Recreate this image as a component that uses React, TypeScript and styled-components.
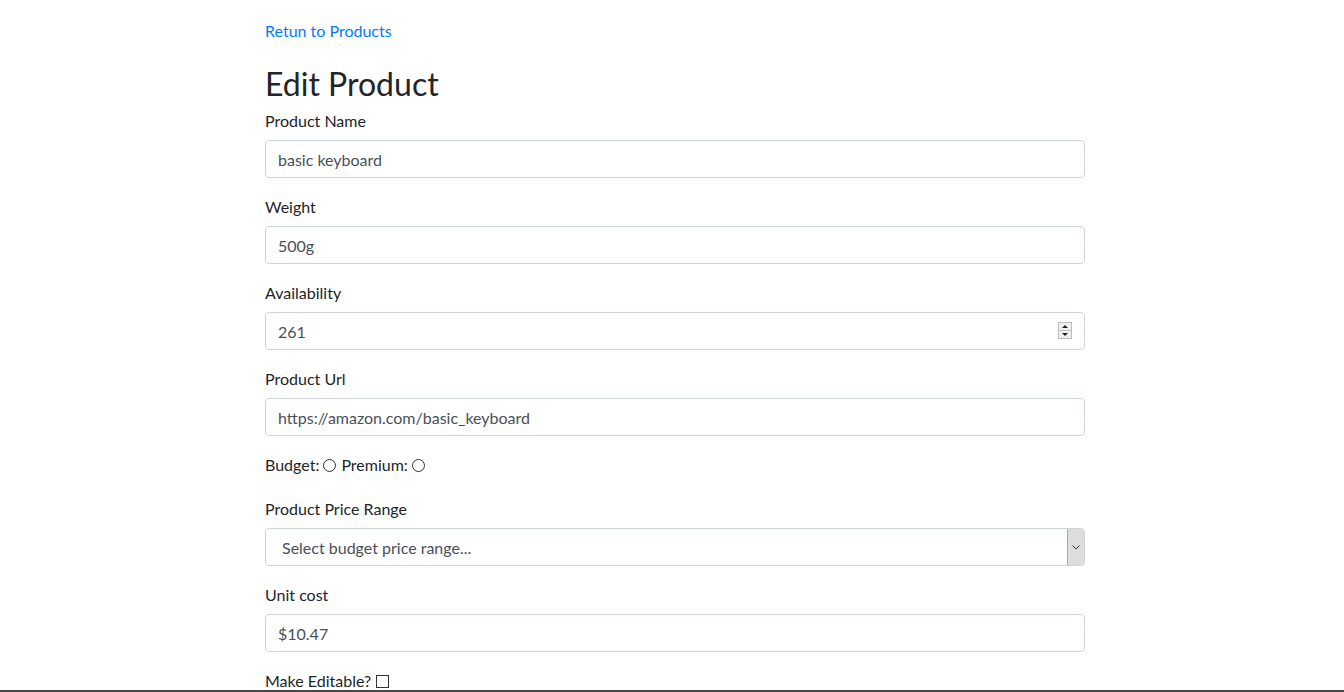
import { useState } from 'react';
import styled, { createGlobalStyle } from 'styled-components';

const GlobalStyle = createGlobalStyle`
  html, body {
    margin: 0;
    padding: 0;
    background: #fff;
  }
  body {
    font-family: "Segoe UI", Lato, "Liberation Sans", sans-serif;
    font-size: 16px;
    line-height: 1.5;
    color: #212529;
    overflow: hidden;
  }
`;

const Page = styled.div`
  height: 692px;
  overflow: hidden;
`;

const Column = styled.div`
  width: 820px;
  margin-left: 265px;
  padding-top: 19px;
`;

const BackLink = styled.a`
  display: inline-block;
  color: #007bff;
  text-decoration: none;
  margin-bottom: 22px;
  cursor: pointer;
`;

const Title = styled.h2`
  margin: 0 0 5px;
  font-size: 32px;
  font-weight: 400;
  line-height: 1.2;
`;

const FormGroup = styled.div<{ $tight?: boolean }>`
  margin-bottom: ${({ $tight }) => ($tight ? '19px' : '16px')};
`;

const Label = styled.label`
  display: block;
  padding-top: 1px;
  margin-bottom: 7px;
`;

const Input = styled.input`
  box-sizing: border-box;
  display: block;
  width: 100%;
  height: 38px;
  padding: 6px 12px;
  font: inherit;
  color: #495057;
  border: 1px solid #ced4da;
  border-radius: 4px;
  background: #fff;
  outline: none;
  appearance: textfield;

  &::-webkit-inner-spin-button,
  &::-webkit-outer-spin-button {
    -webkit-appearance: none;
    margin: 0;
  }
`;

const FieldWrap = styled.div`
  position: relative;
`;

const Spinner = styled.div`
  position: absolute;
  right: 13px;
  top: 10px;
  width: 14px;
  height: 17px;
  box-sizing: border-box;
  border: 1px solid #bdbdbd;
  background: #f0f0f0;
  display: flex;
  flex-direction: column;
  pointer-events: none;
`;

const SpinHalf = styled.div<{ $down?: boolean }>`
  flex: 1;
  display: flex;
  align-items: center;
  justify-content: center;
  border-top: ${({ $down }) => ($down ? '1px solid #bdbdbd' : 'none')};

  &::after {
    content: '';
    width: 0;
    height: 0;
    border-left: 3px solid transparent;
    border-right: 3px solid transparent;
    ${({ $down }) => ($down ? 'border-top: 3px solid #222;' : 'border-bottom: 3px solid #222;')}
  }
`;

const Select = styled.select`
  box-sizing: border-box;
  display: block;
  width: 100%;
  height: 38px;
  padding: 7px 12px 5px 16px;
  font: inherit;
  color: #495057;
  border: 1px solid #ced4da;
  border-radius: 4px;
  background: #fff;
  outline: none;
  appearance: none;
`;

const DropButton = styled.div`
  position: absolute;
  right: 1px;
  top: 1px;
  bottom: 1px;
  width: 16px;
  background: #dddddd;
  border-left: 1px solid #a9a9a9;
  border-radius: 0 3px 3px 0;
  display: flex;
  align-items: center;
  justify-content: center;
  pointer-events: none;
`;

const InlineRow = styled.div`
  display: flex;
  align-items: center;
  padding-top: 1px;
`;

const RadioLabel = styled.label`
  display: inline-flex;
  align-items: center;
  margin-right: 5px;
`;

const Radio = styled.input`
  appearance: none;
  width: 13px;
  height: 13px;
  margin: 0 0 0 4px;
  border: 1px solid #333;
  border-radius: 50%;
  background: #fff;

  &:checked {
    background: radial-gradient(circle, #333 35%, #fff 40%);
  }
`;

const Check = styled.input`
  appearance: none;
  width: 13px;
  height: 13px;
  margin: 0 0 0 5px;
  border: 1px solid #333;
  border-radius: 0;
  background: #fff;
`;

const ScrollEdge = styled.div`
  position: fixed;
  left: 0;
  right: 0;
  bottom: 0;
  height: 2px;
  background: #464646;
`;

const App = () => {
  const [name, setName] = useState('basic keyboard');
  const [weight, setWeight] = useState('500g');
  const [availability, setAvailability] = useState('261');
  const [url, setUrl] = useState('https://amazon.com/basic_keyboard');
  const [cost, setCost] = useState('$10.47');
  const [tier, setTier] = useState('');
  const [editable, setEditable] = useState(false);

  return (
    <Page>
      <GlobalStyle />
      <Column>
        <BackLink>Retun to Products</BackLink>
        <Title>Edit Product</Title>

        <FormGroup>
          <Label>Product Name</Label>
          <Input value={name} onChange={(e) => setName(e.target.value)} />
        </FormGroup>

        <FormGroup>
          <Label>Weight</Label>
          <Input value={weight} onChange={(e) => setWeight(e.target.value)} />
        </FormGroup>

        <FormGroup>
          <Label>Availability</Label>
          <FieldWrap>
            <Input type='number' value={availability} onChange={(e) => setAvailability(e.target.value)} />
            <Spinner>
              <SpinHalf />
              <SpinHalf $down />
            </Spinner>
          </FieldWrap>
        </FormGroup>

        <FormGroup>
          <Label>Product Url</Label>
          <Input value={url} onChange={(e) => setUrl(e.target.value)} />
        </FormGroup>

        <FormGroup $tight>
          <InlineRow>
            <RadioLabel>
              Budget:
              <Radio type='radio' name='tier' checked={tier === 'budget'} onChange={() => setTier('budget')} />
            </RadioLabel>
            <RadioLabel>
              Premium:
              <Radio type='radio' name='tier' checked={tier === 'premium'} onChange={() => setTier('premium')} />
            </RadioLabel>
          </InlineRow>
        </FormGroup>

        <FormGroup>
          <Label>Product Price Range</Label>
          <FieldWrap>
            <Select defaultValue=''>
              <option value=''>Select budget price range...</option>
            </Select>
            <DropButton>
              <svg width='8' height='5' viewBox='0 0 8 5'>
                <path d='M0.5 0.5 L4 4 L7.5 0.5' fill='none' stroke='#333' strokeWidth='1' />
              </svg>
            </DropButton>
          </FieldWrap>
        </FormGroup>

        <FormGroup>
          <Label>Unit cost</Label>
          <Input value={cost} onChange={(e) => setCost(e.target.value)} />
        </FormGroup>

        <InlineRow>
          <label>Make Editable?</label>
          <Check type='checkbox' checked={editable} onChange={() => setEditable(!editable)} />
        </InlineRow>
      </Column>
      <ScrollEdge />
    </Page>
  );
};

export default App;
